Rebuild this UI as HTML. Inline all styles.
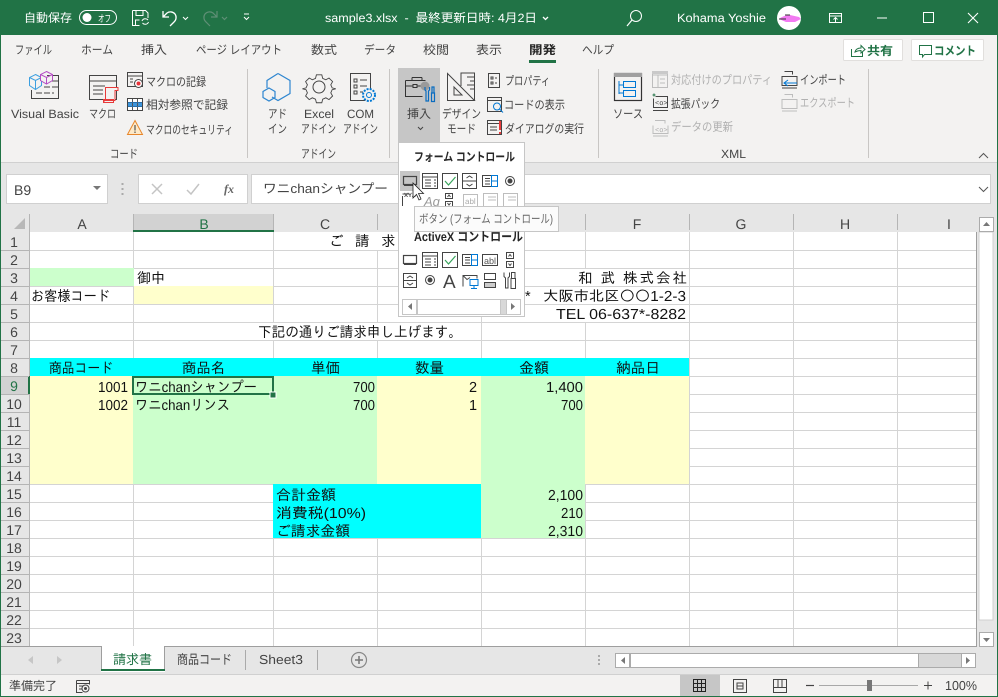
<!DOCTYPE html>
<html lang="ja"><head><meta charset="utf-8"><title>sample3.xlsx</title>
<style>
html,body{margin:0;padding:0;background:#fff;overflow:hidden}
svg{display:block;position:absolute;left:0;top:0}
text{white-space:pre}
.u{font:12px "Liberation Sans","Noto Sans CJK JP",sans-serif;fill:#444}
.g{fill:#b1b1b1}
.w{fill:#fff}
.b{font-weight:700;fill:#262626}
.c{font:14.5px "Liberation Sans","IPAGothic",sans-serif;fill:#111}
.h{font:14px "Liberation Sans","Noto Sans CJK JP",sans-serif;fill:#444;text-anchor:middle}
.s{fill:none;stroke:#444;stroke-width:1}
.d{fill:none;stroke:#bdbdbd;stroke-width:1}
.l{fill:none;stroke:#0078d4;stroke-width:1}
</style></head><body>
<svg width="998" height="697" viewBox="0 0 998 697" xmlns="http://www.w3.org/2000/svg" text-rendering="geometricPrecision">
<!-- backgrounds -->
<rect width="998" height="697" fill="#e6e6e6"/>
<rect x="0" y="0" width="998" height="35" fill="#217346"/>
<rect x="1" y="35" width="996" height="127" fill="#f3f2f1"/>
<rect x="1" y="162" width="996" height="1" fill="#d0d0d0"/>
<!-- title bar -->
<text class="u w" x="24" y="22" textLength="48" lengthAdjust="spacingAndGlyphs">自動保存</text>
<rect x="79.500" y="10.500" width="37" height="14" rx="7" fill="none" stroke="#fff"/>
<circle cx="87" cy="17.500" r="4.500" fill="#fff"/>
<text class="u w" x="98" y="22" style="font-size:10px" textLength="13" lengthAdjust="spacingAndGlyphs">オフ</text>
<g fill="none" stroke="#fff">
<path d="M132.500 10.500h13l2.500 2.500v5M132.500 10.500v15h7M136 10.500v5h7v-5M135.500 25v-5h4"/>
<path d="M142 21a3.500 3.500 0 0 1 6-1M148.500 22a3.500 3.500 0 0 1-6 1" stroke-width="1"/>
<path d="M163 11v6h6M163.500 16.500l3.500-3.500a6 6 0 0 1 8 1 6 6 0 0 1-1 8l-4 4" stroke-width="1.300"/>
<path d="M183 17l2.500 2.500 2.500-2.500M244 17l2.500 2.500 2.500-2.500M244 14h5"/>
<path d="M543 17l2.500 2.500 2.500-2.500" stroke-width="1.300"/>
<circle cx="636" cy="16" r="5.500"/><path d="M632 20l-5 6" stroke-width="1.200"/>
<rect x="829.500" y="13.500" width="12" height="9"/><path d="M830 16h11M835.500 22v-4M833.500 19.500l2-2 2 2"/>
<path d="M877 18h10"/><rect x="923.500" y="12.500" width="10" height="10"/><path d="M968 13l10 10M978 13l-10 10" stroke-width="1.100"/>
</g>
<g fill="none" stroke="#5f8f76" stroke-width="1.200">
<path d="M217 11v6h-6M216.500 16.500l-3.500-3.500a6 6 0 0 0-8 1 6 6 0 0 0 1 8l4 4"/>
<path d="M222 17l2.500 2.500 2.500-2.500"/>
</g>
<text class="u w" x="325" y="22" textLength="212" lengthAdjust="spacingAndGlyphs">sample3.xlsx  -  最終更新日時: 4月2日</text>
<text class="u w" x="677" y="22" textLength="89" lengthAdjust="spacingAndGlyphs">Kohama Yoshie</text>
<circle cx="789" cy="18" r="12" fill="#fff"/>
<path d="M779 19q5-4 11-4l9 2 2 2-6 3h-9z" fill="#f27af2"/><path d="M779 19h7M785 15h5" stroke="#333" stroke-width="1"/>
<!-- tabs -->
<text class="u" x="15" y="54" textLength="37" lengthAdjust="spacingAndGlyphs">ファイル</text>
<text class="u" x="81" y="54" textLength="32" lengthAdjust="spacingAndGlyphs">ホーム</text>
<text class="u" x="141" y="54" textLength="26" lengthAdjust="spacingAndGlyphs">挿入</text>
<text class="u" x="196" y="54" textLength="86" lengthAdjust="spacingAndGlyphs">ページ レイアウト</text>
<text class="u" x="311" y="54" textLength="26" lengthAdjust="spacingAndGlyphs">数式</text>
<text class="u" x="364" y="54" textLength="32" lengthAdjust="spacingAndGlyphs">データ</text>
<text class="u" x="423" y="54" textLength="26" lengthAdjust="spacingAndGlyphs">校閲</text>
<text class="u" x="476" y="54" textLength="26" lengthAdjust="spacingAndGlyphs">表示</text>
<text class="u b" x="529" y="54" textLength="27" lengthAdjust="spacingAndGlyphs">開発</text>
<rect x="529" y="60" width="27" height="3" fill="#217346"/>
<text class="u" x="582" y="54" textLength="32" lengthAdjust="spacingAndGlyphs">ヘルプ</text>
<rect x="843.500" y="39.500" width="59" height="21" rx="1" fill="#fff" stroke="#e1dfdd"/>
<rect x="911.500" y="39.500" width="72" height="21" rx="1" fill="#fff" stroke="#e1dfdd"/>
<path d="M851.500 49v7.500h11V52M855 52q1-4 6-4v-2.500l4 4-4 3.500v-2.500q-3 0-6 1.500z" fill="none" stroke="#217346"/>
<path d="M919.500 45.500h12v9h-7l-2 2.500v-2.500h-3z" fill="none" stroke="#217346"/>
<text class="u" style="fill:#217346;font-weight:700" x="867" y="55" textLength="26" lengthAdjust="spacingAndGlyphs">共有</text>
<text class="u" style="fill:#217346;font-weight:700" x="934" y="55" textLength="42" lengthAdjust="spacingAndGlyphs">コメント</text>
<!-- group separators -->
<g fill="#c8c6c4"><rect x="247" y="69" width="1" height="89"/><rect x="389" y="69" width="1" height="89"/><rect x="598" y="69" width="1" height="89"/><rect x="868" y="69" width="1" height="89"/></g>
<!-- ribbon: code group -->
<path d="M47 75.500h11.500v23h-27V90" class="s"/><path d="M44 81h14M44 87h14M36 93h18" class="s" stroke-dasharray="6 2"/>
<path d="M35.500 74.500l6 3v8l-6 4-6-4v-8zM29.500 77.500l6 3 6-3M35.500 80.500v9" fill="#f3f2f1" stroke="#3b9fe0"/>
<path d="M46.500 71.500l6 3v6l-6 3.500-6-3.500v-6zM40.500 74.500l6 3 6-3M46.500 77.500v6.500" fill="#f3f2f1" stroke="#b44cc4"/>
<rect x="89.500" y="75.500" width="27" height="24" class="s" fill="#f3f2f1"/><path d="M89.500 81h27M93 86h12M93 90h10M93 94h10" class="s"/><path d="M105 87.500h13v3h-3v10h-11v2" fill="#f3f2f1" stroke="#e83a3a"/><path d="M103.500 99.500h10v3h-10zM105.500 87.500v12" fill="none" stroke="#e83a3a"/>
<rect x="127.500" y="72.500" width="15" height="14" class="s"/><path d="M128 76h14M130 79h3M130 82h3" class="s"/><circle cx="138.500" cy="83.500" r="4" fill="#fff" stroke="#444"/><circle cx="138.500" cy="83.500" r="2" fill="#e8343a"/>
<rect x="127.500" y="98.500" width="15" height="12" fill="#fff" stroke="#444"/><rect x="128" y="102" width="14" height="4.500" fill="#3d95dc"/><path d="M132.500 99v11M137.500 99v11" stroke="#555"/><path d="M128 102.500h14M128 106.500h14" stroke="#2a6ea8"/>
<path d="M135 120.500l7.500 14h-15z" fill="#fde9c8" stroke="#e8862a"/><path d="M135 125v5.500M135 131.500v1.500" stroke="#333"/>
<text class="u" x="11" y="118" textLength="68" lengthAdjust="spacingAndGlyphs">Visual Basic</text>
<text class="u" x="89" y="118" textLength="27" lengthAdjust="spacingAndGlyphs">マクロ</text>
<text class="u" x="146" y="86" textLength="60" lengthAdjust="spacingAndGlyphs">マクロの記録</text>
<text class="u" x="146" y="109" textLength="82" lengthAdjust="spacingAndGlyphs">相対参照で記録</text>
<text class="u" x="146" y="134" textLength="87" lengthAdjust="spacingAndGlyphs">マクロのセキュリティ</text>
<text class="u" x="110" y="158" textLength="28" lengthAdjust="spacingAndGlyphs">コード</text>
<!-- add-ins -->
<path d="M278 73.500l12 7v13l-12 7-6-3.500M267 88v-7.500l11-7" fill="none" stroke="#2e86d0" stroke-width="1.200"/>
<path d="M269 88l6 3.500v6l-6 3.500-6-3.500v-6z" fill="none" stroke="#2e86d0" stroke-width="1.200"/>
<circle cx="319" cy="87" r="6" class="s"/><path d="M316 73.500h6l1 4 3.500 1.500 3.500-2 4 4-2 3.500 1.500 3.500 4 1v0l-4 1-1.500 3.500 2 3.500-4 4-3.500-2-3.500 1.500-1 4h-6l-1-4-3.500-1.500-3.500 2-4-4 2-3.500-1.500-3.500-4-1 4-1 1.500-3.500-2-3.500 4-4 3.500 2 3.500-1.500z" class="s" transform="translate(32 8.700) scale(.9)"/>
<path d="M370.500 90v-16.500h-20v27h15" class="s"/><path d="M354 79h3v3h-3zM354 85h3v3h-3zM354 91h3v3h-3zM360 80h7M360 86h7M360 92h3" class="s"/>
<circle cx="369" cy="95" r="2.500" class="l"/><circle cx="369" cy="95" r="6" fill="none" stroke="#0078d4" stroke-width="2" stroke-dasharray="2 1.200"/>
<text class="u" x="268" y="118" textLength="19" lengthAdjust="spacingAndGlyphs">アド</text>
<text class="u" x="268" y="133" textLength="19" lengthAdjust="spacingAndGlyphs">イン</text>
<text class="u" x="304" y="118" textLength="30" lengthAdjust="spacingAndGlyphs">Excel</text>
<text class="u" x="301" y="133" textLength="35" lengthAdjust="spacingAndGlyphs">アドイン</text>
<text class="u" x="347" y="118" textLength="27" lengthAdjust="spacingAndGlyphs">COM</text>
<text class="u" x="343" y="133" textLength="35" lengthAdjust="spacingAndGlyphs">アドイン</text>
<text class="u" x="301" y="158" textLength="35" lengthAdjust="spacingAndGlyphs">アドイン</text>
<!-- controls group -->
<rect x="398" y="68" width="42" height="74" fill="#c6c6c6"/>
<path d="M405.500 80.500h20M405.500 80.500v16h17M405.500 86h8M417 86h4M412 77.500v3M422 77.500v3M412 77.500h10" fill="none" stroke="#333"/><rect x="413" y="84.500" width="4" height="3" fill="none" stroke="#333"/>
<circle cx="425" cy="86" r="4.500" fill="#9a9a9a"/>
<path d="M425 87v3l1 1v10h2.500V91l1-1v-3M432 87h2v6h-2zM431.500 93h3v8.500h-3z" fill="none" stroke="#0a6cc0" stroke-width="1.200"/>
<path d="M447.500 73.500l27 27h-27zM454 87l8 8h-8z" class="s"/><path d="M461 86v-13h13.500v27" class="s"/><path d="M467 77h7M470 81h4M467 85h7M470 89h4" class="s"/>
<rect x="488.500" y="73.500" width="11" height="14" class="s"/><path d="M491 77h2v2h-2zM491 82h2v2h-2zM495 78h2M495 83h2" class="s"/>
<rect x="487.500" y="97.500" width="14" height="14" class="s"/><path d="M488 100.500h13" class="s"/><circle cx="497" cy="106.500" r="3.500" class="l" stroke-width="1.200"/><path d="M499.500 109l3.500 3.500" class="l" stroke-width="1.400"/>
<rect x="487.500" y="120.500" width="14" height="14" class="s"/><path d="M488 123.500h13M490 127h7M490 130h7" class="s"/><path d="M500 121v9" stroke="#e83a3a" stroke-width="2"/><rect x="499" y="132" width="2" height="2" fill="#e83a3a"/>
<text class="u" x="407" y="118" textLength="24" lengthAdjust="spacingAndGlyphs">挿入</text>
<path d="M418 127l2.500 2.500 2.500-2.500" class="s"/>
<text class="u" x="442" y="118" textLength="39" lengthAdjust="spacingAndGlyphs">デザイン</text>
<text class="u" x="447" y="133" textLength="29" lengthAdjust="spacingAndGlyphs">モード</text>
<text class="u" x="505" y="85" textLength="45" lengthAdjust="spacingAndGlyphs">プロパティ</text>
<text class="u" x="504" y="109" textLength="61" lengthAdjust="spacingAndGlyphs">コードの表示</text>
<text class="u" x="505" y="133" textLength="79" lengthAdjust="spacingAndGlyphs">ダイアログの実行</text>
<!-- XML group -->
<rect x="614.500" y="73.500" width="27" height="27" fill="none" stroke="#333" stroke-width="1.200"/><rect x="614" y="73" width="28" height="4" fill="#a0a0a0"/>
<path d="M619 81v13M619 85h4M619 93h4" class="l"/><rect x="623.500" y="81.500" width="12" height="6" class="l"/><rect x="623.500" y="90.500" width="12" height="6" class="l"/>
<path d="M652.500 71.500h15v16h-15zM652.500 75h15M658 75v12.500M660 79h5M660 83h5" class="d"/><rect x="652" y="71" width="16" height="3" fill="#c9c9c9"/>
<path d="M654 93.500v3M652.500 95h3" stroke="#217346"/><path d="M655.500 96.500h12v11h-14v-9M653 110.500h15" class="s"/><text x="655" y="105" style="font:7px 'Liberation Mono',monospace;fill:#444">&lt;o&gt;</text>
<path d="M655 120.500h10v3M653 125.500v8h15v-8M653 136h15" class="d"/><text x="655" y="132" style="font:7px 'Liberation Mono',monospace;fill:#aaa">&lt;o&gt;</text>
<path d="M784.500 71.500h8v3M782 76.500h15v9h-15zM782 88h15" class="s"/><path d="M797 83h-13M788 80l-4 3 4 3" class="l"/>
<path d="M784.500 94.500h8v3M782 99.500h15v9h-15zM782 111h15" class="d"/>
<text class="u" x="613" y="118" textLength="30" lengthAdjust="spacingAndGlyphs">ソース</text>
<text class="u g" x="671" y="84" textLength="101" lengthAdjust="spacingAndGlyphs">対応付けのプロパティ</text>
<text class="u" x="671" y="108" textLength="49" lengthAdjust="spacingAndGlyphs">拡張パック</text>
<text class="u g" x="671" y="131" textLength="62" lengthAdjust="spacingAndGlyphs">データの更新</text>
<text class="u" x="800" y="84" textLength="46" lengthAdjust="spacingAndGlyphs">インポート</text>
<text class="u g" x="800" y="107" textLength="55" lengthAdjust="spacingAndGlyphs">エクスポート</text>
<text class="u" x="721" y="158" textLength="25" lengthAdjust="spacingAndGlyphs">XML</text>
<path d="M979 158l4.500-4.500 4.500 4.500" fill="none" stroke="#555"/>
<!-- formula bar -->
<rect x="6.500" y="174.500" width="101" height="29" fill="#fff" stroke="#d0d0d0"/>
<text x="14" y="195" style="font:14px 'Liberation Sans',sans-serif;fill:#444">B9</text>
<path d="M93 186h8l-4 4z" fill="#777"/>
<path d="M122.500 183v2M122.500 188v2M122.500 193v2" stroke="#aaa" stroke-width="2"/>
<rect x="138.500" y="174.500" width="109" height="29" fill="#fff" stroke="#d0d0d0"/>
<path d="M152 184l10 10M162 184l-10 10" stroke="#c4c4c4" stroke-width="1.500"/>
<path d="M187 190l4 4 8-10" fill="none" stroke="#c4c4c4" stroke-width="1.500"/>
<text x="224" y="193" style="font:italic bold 12px 'Liberation Serif',serif;fill:#666">fx</text>
<rect x="251.500" y="174.500" width="739" height="29" fill="#fff" stroke="#d0d0d0"/>
<text class="u" x="263" y="193" style="font-size:13px" textLength="125" lengthAdjust="spacingAndGlyphs">ワニchanシャンプー</text>
<path d="M979 187l4.500 4.500 4.500-4.500" fill="none" stroke="#555"/>
<!-- sheet -->
<rect x="30" y="232" width="946" height="414" fill="#fff"/>
<g stroke="#d4d4d4" fill="none">
<path d="M133.500 232V646M273.500 232V646M377.500 232V646M481.500 232V646M585.500 232V646M689.500 232V646M793.500 232V646M897.500 232V646"/>
<path d="M30 250.500H976M30 268.500H976M30 286.500H976M30 304.500H976M30 322.500H976M30 340.500H976M30 358.500H976M30 376.500H976M30 394.500H976M30 412.500H976M30 430.500H976M30 448.500H976M30 466.500H976M30 484.500H976M30 502.500H976M30 520.500H976M30 538.500H976M30 556.500H976M30 574.500H976M30 592.500H976M30 610.500H976M30 628.500H976"/>
</g>
<!-- merged / overflow cells hide gridlines -->
<rect x="134" y="323" width="347" height="17" fill="#fff"/>
<rect x="375" y="232" width="5" height="18" fill="#fff"/>
<rect x="584" y="269" width="3" height="17" fill="#fff"/><rect x="584" y="287" width="3" height="17" fill="#fff"/><rect x="584" y="305" width="3" height="17" fill="#fff"/>
<rect x="30" y="268" width="104" height="18" fill="#ccffcc"/>
<rect x="134" y="286" width="139" height="18" fill="#ffffcc"/>
<rect x="30" y="358" width="659" height="18" fill="#00ffff"/>
<rect x="30" y="376" width="103" height="108" fill="#ffffcc"/>
<rect x="133" y="376" width="244" height="108" fill="#ccffcc"/>
<rect x="377" y="376" width="104" height="108" fill="#ffffcc"/>
<rect x="481" y="376" width="104" height="108" fill="#ccffcc"/>
<rect x="585" y="376" width="104" height="108" fill="#ffffcc"/>
<rect x="273" y="484" width="208" height="54" fill="#00ffff"/>
<rect x="481" y="484" width="104" height="54" fill="#ccffcc"/>
<!-- headers -->
<rect x="1" y="214" width="29" height="18" fill="#e6e6e6"/><path d="M25 218v11H14z" fill="#b8b8b8"/>
<rect x="133" y="214" width="140" height="16" fill="#d2d2d2"/><rect x="133" y="230" width="141" height="2" fill="#217346"/>
<rect x="1" y="376" width="27" height="18" fill="#d2d2d2"/><rect x="28" y="376" width="2" height="18" fill="#217346"/>
<g stroke="#b5b5b5" fill="none"><path d="M29.500 214V232M133.500 214V230M273.500 214V230M377.500 214V230M481.500 214V230M585.500 214V230M689.500 214V230M793.500 214V230M897.500 214V230"/>
<path d="M1 250.500H29M1 268.500H29M1 286.500H29M1 304.500H29M1 322.500H29M1 340.500H29M1 358.500H29M1 376.500H29M1 394.500H29M1 412.500H29M1 430.500H29M1 448.500H29M1 466.500H29M1 484.500H29M1 502.500H29M1 520.500H29M1 538.500H29M1 556.500H29M1 574.500H29M1 592.500H29M1 610.500H29M1 628.500H29M29.500 232V376M29.500 394V646"/></g>
<text class="h" x="82" y="229">A</text><text class="h" x="204" y="229" style="fill:#217346">B</text><text class="h" x="325" y="229">C</text><text class="h" x="637" y="229">F</text><text class="h" x="741" y="229">G</text><text class="h" x="845" y="229">H</text><text class="h" x="949" y="229">I</text>
<text class="h" x="14" y="247">1</text><text class="h" x="14" y="265">2</text><text class="h" x="14" y="283">3</text><text class="h" x="14" y="301">4</text><text class="h" x="14" y="319">5</text><text class="h" x="14" y="337">6</text><text class="h" x="14" y="355">7</text><text class="h" x="14" y="373">8</text><text class="h" x="14" y="391" style="fill:#217346">9</text><text class="h" x="14" y="409">10</text><text class="h" x="14" y="427">11</text><text class="h" x="14" y="445">12</text><text class="h" x="14" y="463">13</text><text class="h" x="14" y="481">14</text><text class="h" x="14" y="499">15</text><text class="h" x="14" y="517">16</text><text class="h" x="14" y="535">17</text><text class="h" x="14" y="553">18</text><text class="h" x="14" y="571">19</text><text class="h" x="14" y="589">20</text><text class="h" x="14" y="607">21</text><text class="h" x="14" y="625">22</text><text class="h" x="14" y="643">23</text>
<!-- cells -->
<text class="c" x="329" y="246">ご</text><text class="c" x="355" y="246">請</text><text class="c" x="381" y="246">求</text>
<text class="c" x="137" y="283" textLength="28" lengthAdjust="spacingAndGlyphs">御中</text>
<text class="c" x="31" y="301" textLength="79" lengthAdjust="spacingAndGlyphs">お客様コード</text>
<text class="c" x="578" y="283" textLength="109">和 武 株式会社</text>
<text class="c" x="525" y="301">*</text>
<text class="c" x="543" y="301" textLength="143" lengthAdjust="spacingAndGlyphs">大阪市北区〇〇1-2-3</text>
<text class="c" x="556" y="319" textLength="130" lengthAdjust="spacingAndGlyphs">TEL 06-637*-8282</text>
<text class="c" x="258" y="337" textLength="204" lengthAdjust="spacingAndGlyphs">下記の通りご請求申し上げます。</text>
<text class="c" x="49" y="373" textLength="64" lengthAdjust="spacingAndGlyphs">商品コード</text>
<text class="c" x="182" y="373" textLength="43" lengthAdjust="spacingAndGlyphs">商品名</text>
<text class="c" x="311" y="373" textLength="29" lengthAdjust="spacingAndGlyphs">単価</text>
<text class="c" x="415" y="373" textLength="29" lengthAdjust="spacingAndGlyphs">数量</text>
<text class="c" x="519" y="373" textLength="30" lengthAdjust="spacingAndGlyphs">金額</text>
<text class="c" x="616" y="373" textLength="44" lengthAdjust="spacingAndGlyphs">納品日</text>
<text class="c" x="98" y="392" textLength="30" lengthAdjust="spacingAndGlyphs">1001</text>
<text class="c" x="135" y="392" textLength="122" lengthAdjust="spacingAndGlyphs">ワニchanシャンプー</text>
<text class="c" x="353" y="392" textLength="22" lengthAdjust="spacingAndGlyphs">700</text>
<text class="c" x="469" y="392">2</text>
<text class="c" x="546" y="392" textLength="37" lengthAdjust="spacingAndGlyphs">1,400</text>
<text class="c" x="98" y="410" textLength="30" lengthAdjust="spacingAndGlyphs">1002</text>
<text class="c" x="135" y="410" textLength="95" lengthAdjust="spacingAndGlyphs">ワニchanリンス</text>
<text class="c" x="353" y="410" textLength="22" lengthAdjust="spacingAndGlyphs">700</text>
<text class="c" x="469" y="410">1</text>
<text class="c" x="561" y="410" textLength="22" lengthAdjust="spacingAndGlyphs">700</text>
<text class="c" x="276" y="500" textLength="60" lengthAdjust="spacingAndGlyphs">合計金額</text>
<text class="c" x="548" y="500" textLength="35" lengthAdjust="spacingAndGlyphs">2,100</text>
<text class="c" x="276" y="518" textLength="90" lengthAdjust="spacingAndGlyphs">消費税(10%)</text>
<text class="c" x="561" y="518" textLength="22" lengthAdjust="spacingAndGlyphs">210</text>
<text class="c" x="276" y="536" textLength="74" lengthAdjust="spacingAndGlyphs">ご請求金額</text>
<text class="c" x="548" y="536" textLength="35" lengthAdjust="spacingAndGlyphs">2,310</text>
<!-- selection -->
<rect x="133" y="377" width="140" height="17" fill="none" stroke="#217346" stroke-width="2"/>
<rect x="270" y="392" width="6" height="6" fill="#217346" stroke="#fff"/>
<!-- v scrollbar -->
<rect x="976" y="214" width="21" height="433" fill="#e6e6e6"/>
<rect x="979" y="232" width="14" height="388" fill="#fff" stroke="#d0d0d0"/>
<rect x="979.500" y="217.500" width="14" height="14" fill="#fff" stroke="#ababab"/><path d="M983 226h7l-3.500-4z" fill="#777"/>
<rect x="979.500" y="632.500" width="14" height="14" fill="#fff" stroke="#ababab"/><path d="M983 638h7l-3.500 4z" fill="#777"/>
<path d="M976.500 232V647M30 646.500H977" stroke="#9e9e9e" fill="none"/>
<path d="M1 646.500H101" stroke="#9e9e9e"/>
<!-- sheet tabs -->
<rect x="101" y="646" width="64" height="26" fill="#fff"/>
<path d="M101.500 646v24M164.500 646v24" stroke="#9e9e9e"/>
<rect x="101" y="669" width="64" height="2" fill="#217346"/>
<text class="u" style="fill:#217346;font-size:13px" x="113" y="664" textLength="39" lengthAdjust="spacingAndGlyphs">請求書</text>
<text class="u" style="font-size:13px" x="177" y="664" textLength="55" lengthAdjust="spacingAndGlyphs">商品コード</text>
<text class="u" style="font-size:13px" x="259" y="664" textLength="44" lengthAdjust="spacingAndGlyphs">Sheet3</text>
<path d="M245.500 650v20M317.500 650v20" stroke="#aaa"/>
<path d="M33 656l-5 4 5 4zM57 656l5 4-5 4z" fill="#c6c6c6"/>
<circle cx="359" cy="660" r="7.500" fill="none" stroke="#888" stroke-width="1.200"/><path d="M355 660h8M359 656v8" stroke="#777" stroke-width="1.500"/>
<path d="M599 655v2M599 659v2M599 663v2" stroke="#aaa" stroke-width="2"/>
<rect x="615.500" y="653.500" width="360" height="14" fill="#d8d8d8" stroke="#ababab"/>
<rect x="630.500" y="653.500" width="288" height="14" fill="#fff" stroke="#ababab"/>
<rect x="615.500" y="653.500" width="14" height="14" fill="#fff" stroke="#ababab"/><path d="M625 657v7l-4-3.500z" fill="#777"/>
<rect x="961.500" y="653.500" width="14" height="14" fill="#fff" stroke="#ababab"/><path d="M966 657v7l4-3.500z" fill="#777"/>
<!-- status bar -->
<rect x="1" y="674" width="996" height="22" fill="#f3f2f1"/><rect x="1" y="674" width="996" height="1" fill="#d0d0d0"/>
<text class="u" x="9" y="690" textLength="48" lengthAdjust="spacingAndGlyphs">準備完了</text>
<path d="M76.500 680.500h13v4M76.500 680.500v12h6M77 683.500h12M79 686h4M79 689h3" class="s"/><circle cx="85.500" cy="688.500" r="3.500" class="s"/><circle cx="85.500" cy="688.500" r="1.500" fill="#444"/>
<rect x="680" y="675" width="40" height="21" fill="#c6c6c6"/>
<path d="M693.500 679.500h12v12h-12zM697.500 679.500v12M701.500 679.500v12M693.500 683.500h12M693.500 687.500h12" fill="none" stroke="#222"/>
<path d="M733.500 679.500h13v13h-13zM737 683h6v6h-6zM737 686h6" class="s"/>
<path d="M773.500 679.500h13v13h-13zM773.500 687.500h13M778 679.500v8M782 679.500v8" class="s"/>
<path d="M806 685.500h8" stroke="#444" stroke-width="1.200"/>
<path d="M819 685.500h99" stroke="#a8a8a8"/><rect x="867" y="680" width="5" height="11" fill="#777"/>
<path d="M924 685.500h8M928 681.500v8" stroke="#444"/>
<text class="u" x="945" y="690" style="font-size:13px" textLength="32" lengthAdjust="spacingAndGlyphs">100%</text>
<!-- popup -->
<rect x="398.500" y="142.500" width="126" height="174" fill="#fff" stroke="#c6c6c6"/>
<text class="u b" x="414" y="161" textLength="101" lengthAdjust="spacingAndGlyphs">フォーム コントロール</text>
<rect x="400" y="171" width="20" height="20" fill="#c6c6c6"/>
<g fill="none" stroke="#444">
<rect x="403.500" y="176.500" width="13" height="8" stroke-width="1.200"/><path d="M404 185.500h12"/>
<rect x="422.500" y="173.500" width="15" height="15"/><path d="M423 177h14M425 180h6M425 183h6M425 186h6M434 180h2M434 183h2M434 186h2"/>
<rect x="442.500" y="173.500" width="15" height="15"/>
<rect x="462.500" y="173.500" width="14" height="15"/><path d="M463 181h13M466.500 178l3-2 3 2M466.500 184l3 2 3-2"/>
<rect x="482.500" y="175.500" width="15" height="11"/><path d="M485 178.500h5M485 181h5M485 184h5"/>
<rect x="491.500" y="175.500" width="6" height="11" stroke="#0078d4"/><path d="M492 181h6" stroke="#0078d4"/>
<circle cx="510" cy="181" r="4.500"/><circle cx="510" cy="181" r="2" fill="#444"/>
<path d="M402.500 196v10M402.500 194h7"/>
<rect x="445.500" y="193.500" width="7" height="5"/><rect x="445.500" y="201.500" width="7" height="5"/><path d="M447.500 197l1.500-2 1.500 2M447.500 203l1.500 2 1.500-2"/>
</g>
<path d="M445 181l3.500 4 7-8" fill="none" stroke="#36a35a" stroke-width="1.200"/>
<text x="404" y="197" style="font:bold 6px 'Liberation Sans',sans-serif;fill:#444">XYZ</text>
<text x="424" y="206" style="font:italic 13px 'Liberation Sans',sans-serif;fill:#999" >Ag</text>
<path d="M463.500 194.500h14v12h-14zM483.500 193.500h14v13h-14zM488 197h8M488 200h8M503.500 193.500h14v13h-14zM508 197h8M508 200h8" fill="none" stroke="#bdbdbd"/>
<text x="465" y="204" style="font:8px 'Liberation Sans',sans-serif;fill:#aaa">abl</text>
<path d="M413 183v15l3.500-3.500 2.500 5.500 2-1-2.500-5.500h5z" fill="#fff" stroke="#222" stroke-width=".800"/>
<!-- tooltip -->
<rect x="414.500" y="206.500" width="144" height="25" fill="#fbfbfb" stroke="#c6c6c6"/>
<text class="u" style="fill:#666" x="419" y="223" textLength="134" lengthAdjust="spacingAndGlyphs">ボタン (フォーム コントロール)</text>
<text class="u b" x="414" y="241" style="font-size:12.500px" textLength="109" lengthAdjust="spacingAndGlyphs">ActiveX コントロール</text>
<g fill="none" stroke="#444">
<rect x="403.500" y="255.500" width="13" height="8" stroke-width="1.200"/><path d="M404 264.500h12"/>
<rect x="422.500" y="252.500" width="15" height="15"/><path d="M423 256h14M425 259h6M425 262h6M425 265h6M434 259h2M434 262h2M434 265h2"/>
<rect x="442.500" y="252.500" width="15" height="15"/>
<rect x="462.500" y="254.500" width="15" height="11"/><path d="M465 257.500h5M465 260h5M465 263h5"/>
<rect x="471.500" y="254.500" width="6" height="11" stroke="#0078d4"/><path d="M472 260h6" stroke="#0078d4"/>
<rect x="482.500" y="254.500" width="15" height="11"/>
<rect x="506.500" y="252.500" width="7" height="6"/><rect x="506.500" y="261.500" width="7" height="6"/><path d="M508.500 256.500l1.500-2 1.500 2M508.500 263.500l1.500 2 1.500-2"/>
<rect x="403.500" y="273.500" width="13" height="14"/><path d="M404 280.500h12M407 278l3-2 3 2M407 283l3 2 3-2"/>
<circle cx="430" cy="280" r="4.500"/><circle cx="430" cy="280" r="2" fill="#444"/>
<path d="M463 286.500v-11h14v3M463 275.500l4 4 3-2"/><rect x="470" y="279.500" width="8" height="6" stroke="#0078d4"/><path d="M474 285.500v3M471 288.500h6" stroke="#0078d4"/>
<rect x="484.500" y="273.500" width="11" height="6"/><rect x="484.500" y="282.500" width="11" height="5" fill="#ccc"/>
<path d="M504 272.500v4l1.500 1.500v10h2.500V278l1.500-1.500v-4M511.500 272.500h3.500v6h-3.500zM511 278.500h4.500v10H511z"/>
</g>
<path d="M445 260l3.500 4 7-8" fill="none" stroke="#36a35a" stroke-width="1.200"/>
<text x="484" y="264" style="font:9px 'Liberation Sans',sans-serif;fill:#555">abl</text>
<text x="443" y="288" style="font:19px 'Liberation Sans',sans-serif;fill:#444">A</text>
<rect x="402.500" y="299.500" width="118" height="15" fill="#d8d8d8" stroke="#c6c6c6"/>
<rect x="417.500" y="299.500" width="83" height="15" fill="#fff" stroke="#c6c6c6"/>
<rect x="402.500" y="299.500" width="14" height="15" fill="#fff" stroke="#c6c6c6"/><path d="M412 303v7l-4-3.500z" fill="#777"/>
<rect x="506.500" y="299.500" width="14" height="15" fill="#fff" stroke="#c6c6c6"/><path d="M511 303v7l4-3.500z" fill="#777"/>
<!-- window border -->
<rect x="0" y="35" width="1" height="662" fill="#217346"/><rect x="997" y="35" width="1" height="662" fill="#217346"/><rect x="0" y="696" width="998" height="1" fill="#217346"/>
</svg>
</body></html>
